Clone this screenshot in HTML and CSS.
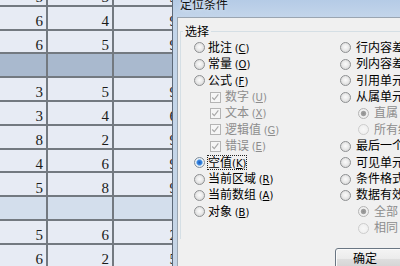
FILE: index.html
```html
<!DOCTYPE html>
<html lang="zh-CN">
<head>
<meta charset="utf-8">
<title>定位条件</title>
<link rel="stylesheet" href="styles.css">
</head>
<body>
<div class="screen">
  <div class="sheet">
    <div class="grid">
      <div class="cell">5</div><div class="cell">3</div><div class="cell">9</div>
      <div class="cell">6</div><div class="cell">4</div><div class="cell">9</div>
      <div class="cell">6</div><div class="cell">5</div><div class="cell">9</div>
      <div class="cell dark"></div><div class="cell dark"></div><div class="cell dark"></div>
      <div class="cell">3</div><div class="cell">5</div><div class="cell">9</div>
      <div class="cell">3</div><div class="cell">4</div><div class="cell">6</div>
      <div class="cell">8</div><div class="cell">2</div><div class="cell">9</div>
      <div class="cell">4</div><div class="cell">6</div><div class="cell">9</div>
      <div class="cell">5</div><div class="cell">8</div><div class="cell">9</div>
      <div class="cell light"></div><div class="cell light"></div><div class="cell light"></div>
      <div class="cell">5</div><div class="cell">6</div><div class="cell">2</div>
      <div class="cell">6</div><div class="cell">2</div><div class="cell">5</div>
    </div>
  </div>
  <div class="dialog">
    <div class="titlebar"><span class="title">定位条件</span></div>
    <div class="client">
      <fieldset class="group">
        <legend>选择</legend>
        <div class="cols">
          <div class="col left">
            <div class="opt"><span class="radio"></span><span>批注 <span class="acc">(<u>C</u>)</span></span></div>
            <div class="opt"><span class="radio"></span><span>常量 <span class="acc">(<u>O</u>)</span></span></div>
            <div class="opt"><span class="radio"></span><span>公式 <span class="acc">(<u>F</u>)</span></span></div>
            <div class="opt sub dis"><span class="check"><svg viewBox="0 0 11 11" width="9" height="9"><polyline points="1.5,5.5 4,8.2 9,1.8" fill="none" stroke="#a9a9a9" stroke-width="1.4"/></svg></span><span>数字 <span class="acc">(<u>U</u>)</span></span></div>
            <div class="opt sub dis"><span class="check"><svg viewBox="0 0 11 11" width="9" height="9"><polyline points="1.5,5.5 4,8.2 9,1.8" fill="none" stroke="#a9a9a9" stroke-width="1.4"/></svg></span><span>文本 <span class="acc">(<u>X</u>)</span></span></div>
            <div class="opt sub dis"><span class="check"><svg viewBox="0 0 11 11" width="9" height="9"><polyline points="1.5,5.5 4,8.2 9,1.8" fill="none" stroke="#a9a9a9" stroke-width="1.4"/></svg></span><span>逻辑值 <span class="acc">(<u>G</u>)</span></span></div>
            <div class="opt sub dis"><span class="check"><svg viewBox="0 0 11 11" width="9" height="9"><polyline points="1.5,5.5 4,8.2 9,1.8" fill="none" stroke="#a9a9a9" stroke-width="1.4"/></svg></span><span>错误 <span class="acc">(<u>E</u>)</span></span></div>
            <div class="opt"><span class="radio on"></span><span class="focus">空值<span class="acc">(<u>K</u>)</span></span></div>
            <div class="opt"><span class="radio"></span><span>当前区域 <span class="acc">(<u>R</u>)</span></span></div>
            <div class="opt"><span class="radio"></span><span>当前数组 <span class="acc">(<u>A</u>)</span></span></div>
            <div class="opt"><span class="radio"></span><span>对象 <span class="acc">(<u>B</u>)</span></span></div>
          </div>
          <div class="col right">
            <div class="opt"><span class="radio"></span><span>行内容差异单元格 <span class="acc">(<u>W</u>)</span></span></div>
            <div class="opt"><span class="radio"></span><span>列内容差异单元格 <span class="acc">(<u>M</u>)</span></span></div>
            <div class="opt"><span class="radio"></span><span>引用单元格 <span class="acc">(<u>P</u>)</span></span></div>
            <div class="opt"><span class="radio"></span><span>从属单元格 <span class="acc">(<u>D</u>)</span></span></div>
            <div class="opt sub dis"><span class="radio on-dis"></span><span>直属 <span class="acc">(<u>I</u>)</span></span></div>
            <div class="opt sub dis"><span class="radio off-dis"></span><span>所有级别 <span class="acc">(<u>L</u>)</span></span></div>
            <div class="opt"><span class="radio"></span><span>最后一个单元格 <span class="acc">(<u>S</u>)</span></span></div>
            <div class="opt"><span class="radio"></span><span>可见单元格 <span class="acc">(<u>Y</u>)</span></span></div>
            <div class="opt"><span class="radio"></span><span>条件格式 <span class="acc">(<u>T</u>)</span></span></div>
            <div class="opt"><span class="radio"></span><span>数据有效性 <span class="acc">(<u>V</u>)</span></span></div>
            <div class="opt sub dis"><span class="radio on-dis"></span><span>全部 <span class="acc">(<u>L</u>)</span></span></div>
            <div class="opt sub dis"><span class="radio off-dis"></span><span>相同 <span class="acc">(<u>E</u>)</span></span></div>
          </div>
        </div>
      </fieldset>
      <div class="footer"><button class="btn" type="button">确定</button></div>
    </div>
  </div>
</div>
</body>
</html>
```
FILE: styles.css
```css
html, body {
  margin: 0;
  padding: 0;
}
body {
  width: 400px;
  height: 266px;
  overflow: hidden;
  background: #f0f0f0;
}
.screen {
  display: flex;
  width: 400px;
  height: 266px;
  overflow: hidden;
}

/* spreadsheet */
.sheet {
  flex: none;
  width: 172px;
  height: 266px;
  overflow: hidden;
  background: #737980;
}
.grid {
  display: grid;
  grid-template-columns: 46px 64px 66px;
  grid-template-rows: 4.8px repeat(11, 21.8px);
  gap: 2px;
  width: 180px;
}
.cell {
  background: #e7ebf4;
  display: flex;
  justify-content: flex-end;
  align-items: flex-end;
  padding: 0 3px 1.5px 0;
  font: 15px/12px "Liberation Serif", serif;
  color: #1b1b1b;
  overflow: hidden;
}
.cell.dark { background: #a9b9ce; }
.cell.light { background: #d3deec; }

/* dialog */
.dialog {
  flex: 1;
  min-width: 0;
  display: flex;
  flex-direction: column;
  border-left: 1px solid #5d6978;
  background: linear-gradient(180deg, #b5cbe6 0, #c3d5ea 17px, #c6d5e6 100%);
  overflow: hidden;
}
.titlebar {
  flex: none;
  height: 17px;
  display: flex;
  padding-left: 7px;
  font: 12px/12px "Noto Sans CJK SC", sans-serif;
  color: #111;
}
.title {
  margin-top: -2px;
  white-space: nowrap;
  text-shadow: 0 0 4px rgba(255, 255, 255, 0.7);
}
.client {
  flex: 1;
  margin-left: 4px;
  border-left: 1px solid #9aa5b1;
  border-top: 1px solid #9aa5b1;
  background: #f0f0f0;
  display: flex;
  flex-direction: column;
  overflow: hidden;
  font: 12px/16.4px "Noto Sans CJK SC", sans-serif;
  color: #000;
}
.group {
  margin: 7px 0 0 2px;
  padding: 2.8px 0 3px 0;
  border: 1px solid #d5dfe5;
  border-bottom: none;
  border-right: none;
  min-width: 0;
}
.group legend {
  padding: 0 2px;
  margin-left: 2px;
  font-size: 12px;
  line-height: 12px;
}
.cols {
  display: grid;
  grid-template-columns: 146px auto;
  padding-left: 13px;
}
.col {
  min-width: 0;
}
.opt {
  display: flex;
  align-items: center;
  height: 16.4px;
  white-space: nowrap;
}
.opt.dis {
  color: #8d8d8d;
}
.left .opt.sub { padding-left: 16px; }
.right .opt.sub { padding-left: 18px; }

.acc {
  font-family: "DejaVu Sans", sans-serif;
  font-size: 10px;
}
.focus {
  outline: 1px dotted #222;
  line-height: 11px;
}

.radio {
  flex: none;
  box-sizing: border-box;
  width: 11px;
  height: 11px;
  border-radius: 50%;
  border: 1px solid #8e9092;
  background: radial-gradient(circle at 50% 45%, #fbfbfb 0, #eeeeee 35%, #cfcfcf 100%);
  margin-right: 3px;
}
.right .radio { margin-right: 5px; }
.radio.on {
  border-color: #7f8c99;
  background: radial-gradient(circle, #1c5cbd 0, #3a86df 2.2px, #8fc0f0 3px, #eef3f8 3.6px, #dfe4ea 100%);
}
.radio.on-dis {
  border-color: #b4b4b4;
  background: radial-gradient(circle, #8e8e8e 0, #a2a2a2 2.3px, #f3f3f3 3.2px, #e6e6e6 100%);
}
.radio.off-dis {
  border-color: #cdcdcd;
  background: radial-gradient(circle, #f7f7f7 0, #ececec 100%);
}
.check {
  flex: none;
  box-sizing: border-box;
  width: 11px;
  height: 11px;
  border: 1px solid #b4b4b4;
  background: #f6f6f6;
  margin-right: 4px;
  display: flex;
  align-items: center;
  justify-content: center;
}
.check svg { display: block; }

.footer {
  padding-left: 157px;
  margin-top: 8.4px;
}
.btn {
  display: block;
  box-sizing: border-box;
  width: 75px;
  height: 23px;
  border: 1px solid #6a7683;
  border-radius: 3px;
  background: linear-gradient(180deg, #f4f4f4 0, #ececec 45%, #dedede 50%, #d0d0d0 100%);
  box-shadow: inset 0 0 0 1px #fbfbfb;
  font: 12px/16px "Noto Sans CJK SC", sans-serif;
  color: #000;
  text-align: left;
  padding: 0 0 3px 17px;
}
```
